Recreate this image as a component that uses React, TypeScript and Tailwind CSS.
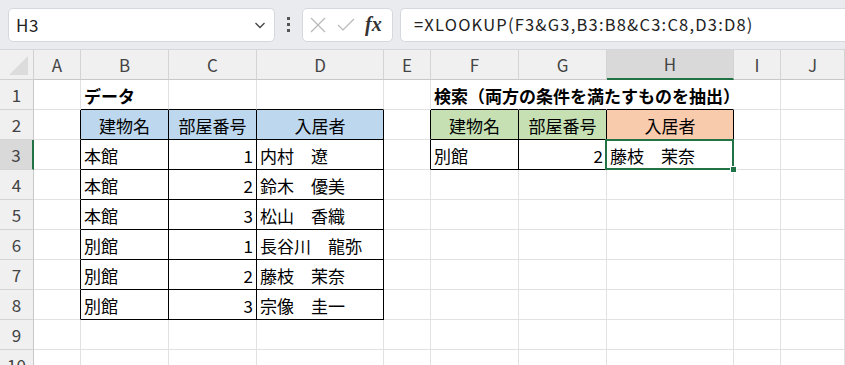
import React from "react";

const COLS = ["A", "B", "C", "D", "E", "F", "G", "H", "I", "J"];
const FONT = { fontFamily: '"Noto Sans CJK JP", "Noto Sans", sans-serif' };

type Cell = {
  text?: string;
  align?: "l" | "c" | "r";
  bold?: boolean;
  bg?: string;
};

const data: Record<string, Cell> = {
  B1: { text: "データ", bold: true },
  F1: { text: "検索（両方の条件を満たすものを抽出）", bold: true },
  B2: { text: "建物名", align: "c", bg: "blue" },
  C2: { text: "部屋番号", align: "c", bg: "blue" },
  D2: { text: "入居者", align: "c", bg: "blue" },
  F2: { text: "建物名", align: "c", bg: "green" },
  G2: { text: "部屋番号", align: "c", bg: "green" },
  H2: { text: "入居者", align: "c", bg: "orange" },
  B3: { text: "本館" }, C3: { text: "1", align: "r" }, D3: { text: "内村　遼" },
  B4: { text: "本館" }, C4: { text: "2", align: "r" }, D4: { text: "鈴木　優美" },
  B5: { text: "本館" }, C5: { text: "3", align: "r" }, D5: { text: "松山　香織" },
  B6: { text: "別館" }, C6: { text: "1", align: "r" }, D6: { text: "長谷川　龍弥" },
  B7: { text: "別館" }, C7: { text: "2", align: "r" }, D7: { text: "藤枝　茉奈" },
  B8: { text: "別館" }, C8: { text: "3", align: "r" }, D8: { text: "宗像　圭一" },
  F3: { text: "別館" }, G3: { text: "2", align: "r" }, H3: { text: "藤枝　茉奈" },
};

function inTable(r: number, c: number) {
  if (r >= 2 && r <= 8 && c >= 1 && c <= 3) return true;
  if (r >= 2 && r <= 3 && c >= 5 && c <= 7) return true;
  return false;
}

function GridCell({ r, c }: { r: number; c: number }) {
  const key = COLS[c] + r;
  const cell = data[key];
  const rightBlack = inTable(r, c) || inTable(r, c + 1);
  const bottomBlack = inTable(r, c) || inTable(r + 1, c);
  const hideRight = r === 1 && (c === 5 || c === 6 || c === 7);
  const rightCls = hideRight
    ? "border-r-white"
    : rightBlack
    ? "border-r-black"
    : "border-r-[#e1e1e1]";
  const bottomCls = bottomBlack ? "border-b-black" : "border-b-[#e1e1e1]";
  const bgCls =
    cell?.bg === "blue"
      ? "bg-[#bdd7ee]"
      : cell?.bg === "green"
      ? "bg-[#c6e0b4]"
      : cell?.bg === "orange"
      ? "bg-[#f8cbad]"
      : "";
  const alignCls =
    cell?.align === "c"
      ? "justify-center"
      : cell?.align === "r"
      ? "justify-end pr-[3px]"
      : "justify-start pl-[3px]";
  const selected = key === "H3";
  return (
    <div
      className={`relative h-[30px] border-r border-b flex items-center ${rightCls} ${bottomCls} ${bgCls} ${alignCls}`}
    >
      {cell?.text && (
        <span
          className={`whitespace-nowrap text-[17px] leading-none text-black relative z-10 pt-[1px] ${
            cell.bold ? "font-bold" : ""
          }`}
        >
          {cell.text}
        </span>
      )}
      {selected && (
        <>
          <div className="absolute left-[-2px] top-[-1px] right-[-1px] bottom-[-1px] border-2 border-[#217346] z-20" />
          <div className="absolute right-[-4px] bottom-[-4px] w-[7px] h-[7px] bg-[#217346] border border-white z-30" />
        </>
      )}
    </div>
  );
}

export default function App() {
  const rows = [1, 2, 3, 4, 5, 6, 7, 8, 9, 10];
  return (
    <div className="w-[845px] h-[365px] overflow-hidden bg-white" style={FONT}>
      {/* Formula bar */}
      <div className="h-[50px] bg-[#e9ebef] border-b border-[#d4d6da] flex items-center pl-[8px] gap-0">
        <div className="w-[267px] h-[34px] bg-white rounded-[5px] border border-[#d5d8dd] flex items-center pl-[7px] pr-[6px]">
          <span className="text-[17px] tracking-[0.5px] text-[#222] flex-1">H3</span>
          <svg width="14" height="14" viewBox="0 0 14 14" className="mr-[1px]">
            <path d="M2.5 5 L7 9.5 L11.5 5" fill="none" stroke="#444" strokeWidth="1.3" />
          </svg>
        </div>
        <div className="w-[27px] flex flex-col items-center gap-[3px]">
          <div className="w-[3px] h-[3px] bg-[#555]" />
          <div className="w-[3px] h-[3px] bg-[#555]" />
          <div className="w-[3px] h-[3px] bg-[#555]" />
        </div>
        <div className="w-[91px] h-[34px] bg-white rounded-[5px] border border-[#d5d8dd] flex items-center pl-[6px] gap-[9px]">
          <svg width="18" height="18" viewBox="0 0 18 18">
            <path d="M2 2 L16 16 M16 2 L2 16" stroke="#b8b8b8" strokeWidth="1.2" fill="none" />
          </svg>
          <svg width="20" height="18" viewBox="0 0 20 18">
            <path d="M2 9 L7 14 L18 3" stroke="#b8b8b8" strokeWidth="1.2" fill="none" />
          </svg>
          <span
            className="text-[20px] italic font-bold text-[#333] leading-none -mt-[2px]"
            style={{ fontFamily: '"Liberation Serif", "DejaVu Serif", serif' }}
          >
            fx
          </span>
        </div>
        <div className="ml-[7px] flex-1 h-[34px] bg-white rounded-l-[5px] border border-r-0 border-[#d5d8dd] flex items-center pl-[13px]">
          <span className="text-[16.5px] tracking-[1.2px] text-[#222] whitespace-nowrap">
            =XLOOKUP(F3&amp;G3,B3:B8&amp;C3:C8,D3:D8)
          </span>
        </div>
      </div>

      {/* Sheet */}
      <div className="grid grid-cols-[34px_47px_88px_88px_127px_47px_88px_88px_127px_47px_1fr]">
        {/* Column headers */}
        <div className="h-[30px] bg-[#f0f0f0] border-r border-b border-[#d0d0d0] relative overflow-hidden">
          <svg width="34" height="30" className="absolute inset-0">
            <polygon points="28,6 28,25 9,25" fill="#dcdcdc" />
          </svg>
        </div>
        {COLS.map((c) => (
          <div
            key={c}
            className={`h-[30px] flex items-center justify-center text-[17px] text-[#444] border-r border-[#d4d4d4] ${
              c === "H"
                ? "bg-[#d9d9d9] border-b-2 border-b-[#217346]"
                : "bg-[#f0f0f0] border-b border-b-[#c8c8c8]"
            }`}
          >
            {c}
          </div>
        ))}
        {rows.map((r) => (
          <React.Fragment key={r}>
            <div
              className={`h-[30px] flex items-center justify-center text-[17px] text-[#444] border-b border-b-[#d4d4d4] ${
                r === 3
                  ? "bg-[#d9d9d9] border-r-2 border-r-[#217346]"
                  : "bg-[#f0f0f0] border-r border-r-[#c8c8c8]"
              }`}
            >
              {r}
            </div>
            {COLS.map((_, ci) => (
              <GridCell key={ci} r={r} c={ci} />
            ))}
          </React.Fragment>
        ))}
      </div>
    </div>
  );
}
